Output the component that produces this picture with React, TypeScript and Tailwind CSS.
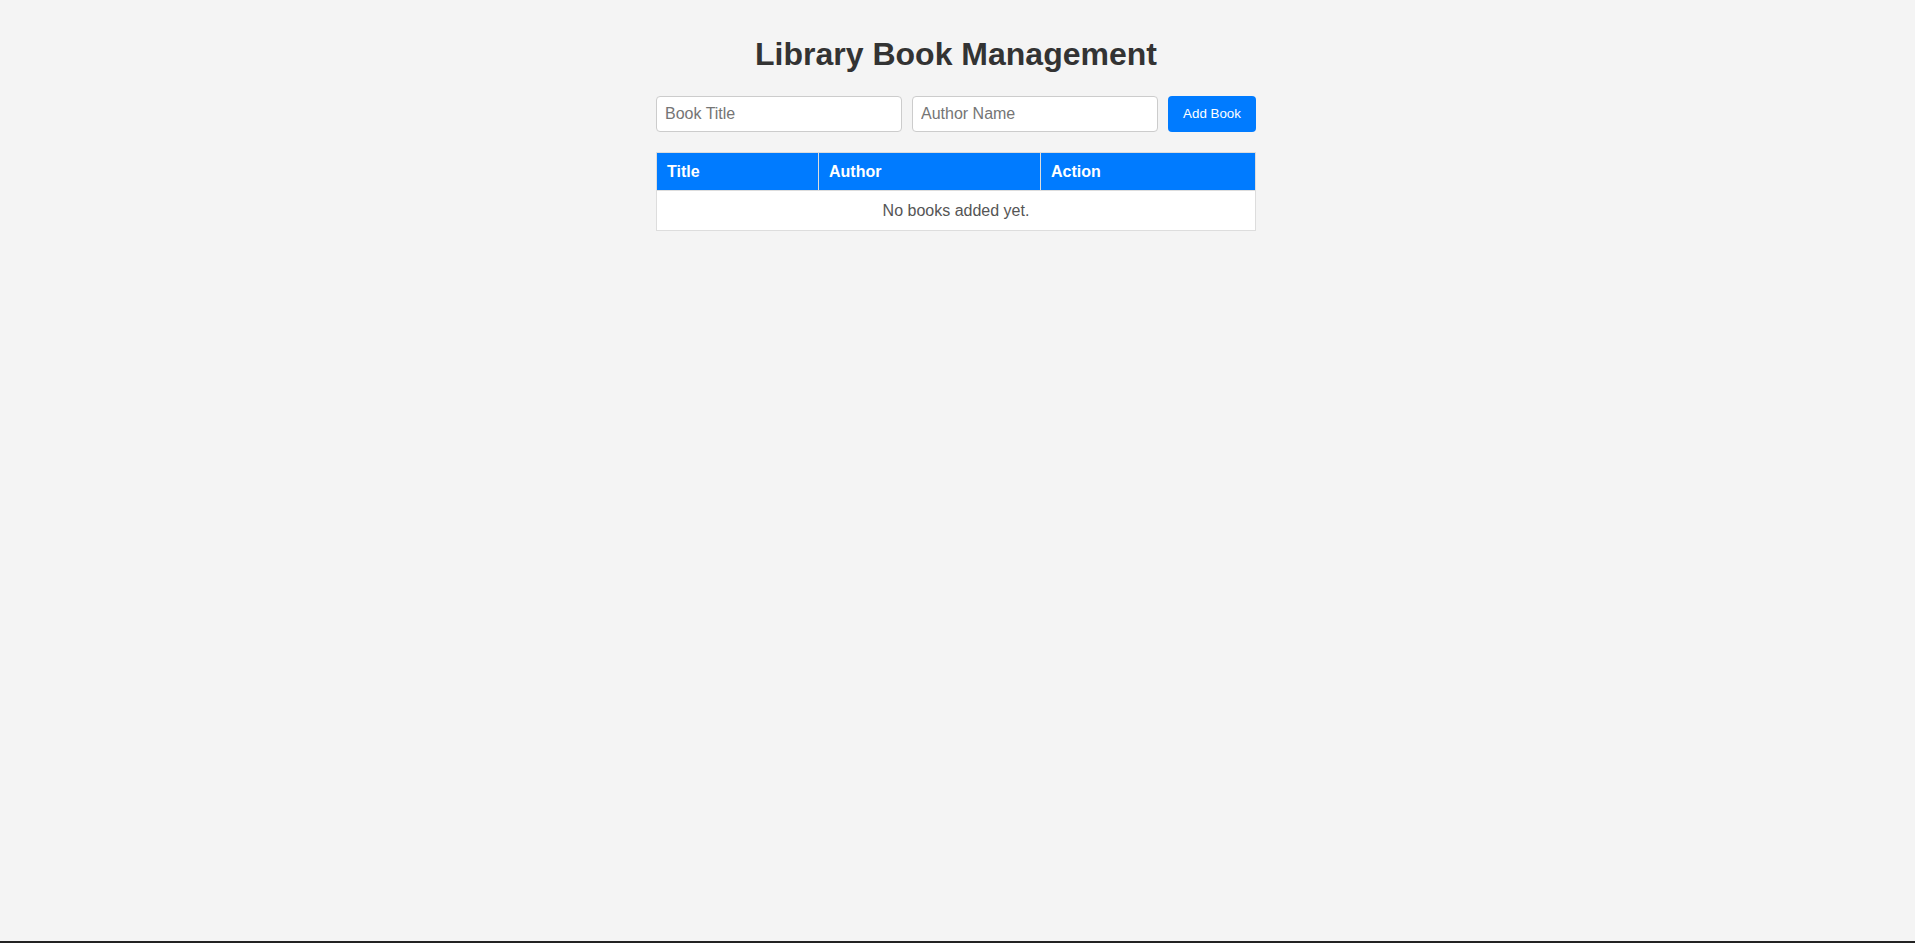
import React, { useState } from "react";

export default function App() {
  const [title, setTitle] = useState("");
  const [author, setAuthor] = useState("");
  return (
    <div
      className="h-[943px] bg-[#f4f4f4] border-b-2 border-[#222] box-border pr-[3px]"
      style={{ fontFamily: '"Liberation Sans", Arial, sans-serif' }}
    >
      <div className="w-[600px] mx-auto pt-[36px]">
        <h1 className="text-[32px] leading-[37px] font-bold text-[#333] text-center mb-[23px]">
          Library Book Management
        </h1>
        <div className="flex gap-[10px] mb-[20px]">
          <input
            value={title}
            onChange={(e) => setTitle(e.target.value)}
            placeholder="Book Title"
            className="flex-1 min-w-0 h-[36px] px-[8px] text-[16px] bg-white border border-[#ccc] rounded-[4px] text-[#333] placeholder:text-[#757575] outline-none"
          />
          <input
            value={author}
            onChange={(e) => setAuthor(e.target.value)}
            placeholder="Author Name"
            className="flex-1 min-w-0 h-[36px] px-[8px] text-[16px] bg-white border border-[#ccc] rounded-[4px] text-[#333] placeholder:text-[#757575] outline-none"
          />
          <button className="w-[88px] h-[36px] bg-[#007bff] text-white text-[13.33px] rounded-[4px]">
            Add Book
          </button>
        </div>
        <table className="w-full border-collapse bg-white text-[16px]">
          <thead>
            <tr className="bg-[#007bff] text-white">
              <th className="w-[162px] h-[38px] border border-[#ddd] px-[10px] text-left font-bold">Title</th>
              <th className="w-[222px] h-[38px] border border-[#ddd] px-[10px] text-left font-bold">Author</th>
              <th className="h-[38px] border border-[#ddd] px-[10px] text-left font-bold">Action</th>
            </tr>
          </thead>
          <tbody>
            <tr>
              <td colSpan={3} className="h-[40px] border border-[#ddd] text-center text-[#555]">
                No books added yet.
              </td>
            </tr>
          </tbody>
        </table>
      </div>
    </div>
  );
}
